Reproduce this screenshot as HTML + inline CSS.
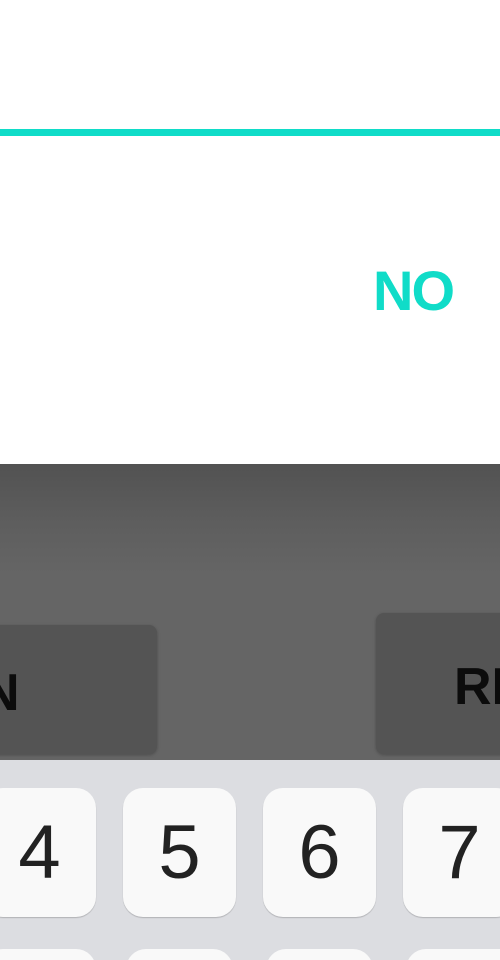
<!DOCTYPE html>
<html><head><style>
html,body{margin:0;width:500px;height:960px;overflow:hidden}
body{background:#fff;font-family:"Liberation Sans",sans-serif}
.wrap{position:relative;width:500px;height:960px;overflow:hidden}
.line{position:absolute;left:0;top:129px;width:500px;height:7px;background:#10dcc8}
.no{position:absolute;left:373px;top:263px;font-size:56px;font-weight:bold;color:#10dcc8;letter-spacing:-2px;line-height:1}
.dim{position:absolute;left:0;top:464px;width:500px;height:296px;background:linear-gradient(#525252 0px,#5e5e5e 60px,#656565 110px,#656565);overflow:hidden}
.btn{position:absolute;background:#545454;border-radius:8px;box-shadow:0 1px 3px rgba(0,0,0,.25);color:#0c0c0c;font-weight:bold;font-size:52px;line-height:1;overflow:hidden}
.kb{position:absolute;left:0;top:760px;width:500px;height:200px;background:#dcdde1;overflow:hidden}
.k{position:absolute;width:113px;height:129px;background:#f9f9f9;border-radius:20px;box-shadow:0 1px 1px rgba(0,0,0,.2);font-size:76px;color:#222;text-align:center;line-height:129px}
</style></head><body>
<div class="wrap">
<div class="line"></div>
<div class="no">NO</div>
<div class="dim">
<div class="btn" style="left:-20px;top:161px;width:177px;height:129px"><span style="position:absolute;left:2px;top:42px">N</span></div>
<div class="btn" style="left:376px;top:149px;width:160px;height:141px"><span style="position:absolute;left:78px;top:48px">RE</span></div>
</div>
<div class="kb">
<div class="k" style="left:-17px;top:28px">4</div>
<div class="k" style="left:123px;top:28px">5</div>
<div class="k" style="left:263px;top:28px">6</div>
<div class="k" style="left:403px;top:28px">7</div>
<div class="k" style="left:-17px;top:189px"></div>
<div class="k" style="left:126px;top:189px;width:107px"></div>
<div class="k" style="left:266px;top:189px;width:107px"></div>
<div class="k" style="left:406px;top:189px"></div>
</div>
</div>
</body></html>
